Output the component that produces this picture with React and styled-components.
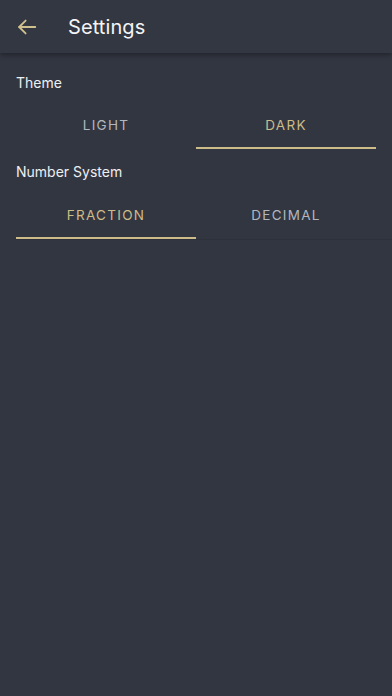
import React, { useState } from "react";
import styled, { createGlobalStyle } from "styled-components";

const Global = createGlobalStyle`
  html, body { margin: 0; padding: 0; background: #323641; }
  body { font-family: "Inter", "Noto Sans", sans-serif; }
  #root { min-height: 100vh; }
`;

const Page = styled.div`
  min-height: 696px;
  background: #323641;
  color: #f1f1f3;
  overflow: hidden;
`;

const Header = styled.header`
  height: 53px;
  display: flex;
  align-items: center;
  padding: 0 16px;
  gap: 30px;
  background: #333742;
  box-shadow: 0 2px 5px rgba(0, 0, 0, 0.35);
  position: relative;
`;

const BackButton = styled.button`
  width: 22px;
  height: 22px;
  padding: 0;
  border: 0;
  background: none;
  display: flex;
  align-items: center;
  justify-content: center;
  cursor: pointer;
`;

const Title = styled.h1`
  margin: 0;
  font-size: 20px;
  font-weight: 400;
  letter-spacing: 0.1px;
  color: #f4f4f6;
`;

const Section = styled.section`
  padding: 0 16px;
`;

const Label = styled.div`
  padding-top: ${(p) => p.$top}px;
  height: 20px;
  line-height: 20px;
  font-size: 14px;
  color: #eeeff2;
`;

const TabRow = styled.div`
  display: grid;
  grid-template-columns: 180px 180px;
  margin-top: ${(p) => p.$gap}px;
  margin-right: ${(p) => (p.$bleed ? "-16px" : "0")};
  border-bottom: 1px solid ${(p) => (p.$bleed ? "#2d313b" : "transparent")};
`;

const Tab = styled.button`
  height: 48px;
  border: 0;
  background: none;
  padding: 0;
  font-family: inherit;
  font-size: 13.5px;
  letter-spacing: 1.3px;
  font-weight: 400;
  color: ${(p) => (p.$active ? "#cdbb88" : "#b3b6bf")};
  border-bottom: 2px solid ${(p) => (p.$active ? "#cdbb88" : "transparent")};
  cursor: pointer;
  padding-top: 2px;
`;

export default function App() {
  const [theme, setTheme] = useState("dark");
  const [num, setNum] = useState("fraction");
  return (
    <Page>
      <Global />
      <Header>
        <BackButton aria-label="Back">
          <svg width="22" height="22" viewBox="0 0 24 24" fill="none" stroke="#cfc18e" strokeWidth="2" strokeLinecap="round" strokeLinejoin="round">
            <path d="M21 12H3.5" />
            <path d="M10.5 5l-7 7 7 7" />
          </svg>
        </BackButton>
        <Title>Settings</Title>
      </Header>
      <Section>
        <Label $top={20}>Theme</Label>
        <TabRow $gap={8}>
          <Tab $active={theme === "light"} onClick={() => setTheme("light")}>LIGHT</Tab>
          <Tab $active={theme === "dark"} onClick={() => setTheme("dark")}>DARK</Tab>
        </TabRow>
        <Label $top={12}>Number System</Label>
        <TabRow $gap={9} $bleed>
          <Tab $active={num === "fraction"} onClick={() => setNum("fraction")}>FRACTION</Tab>
          <Tab $active={num === "decimal"} onClick={() => setNum("decimal")}>DECIMAL</Tab>
        </TabRow>
      </Section>
    </Page>
  );
}
